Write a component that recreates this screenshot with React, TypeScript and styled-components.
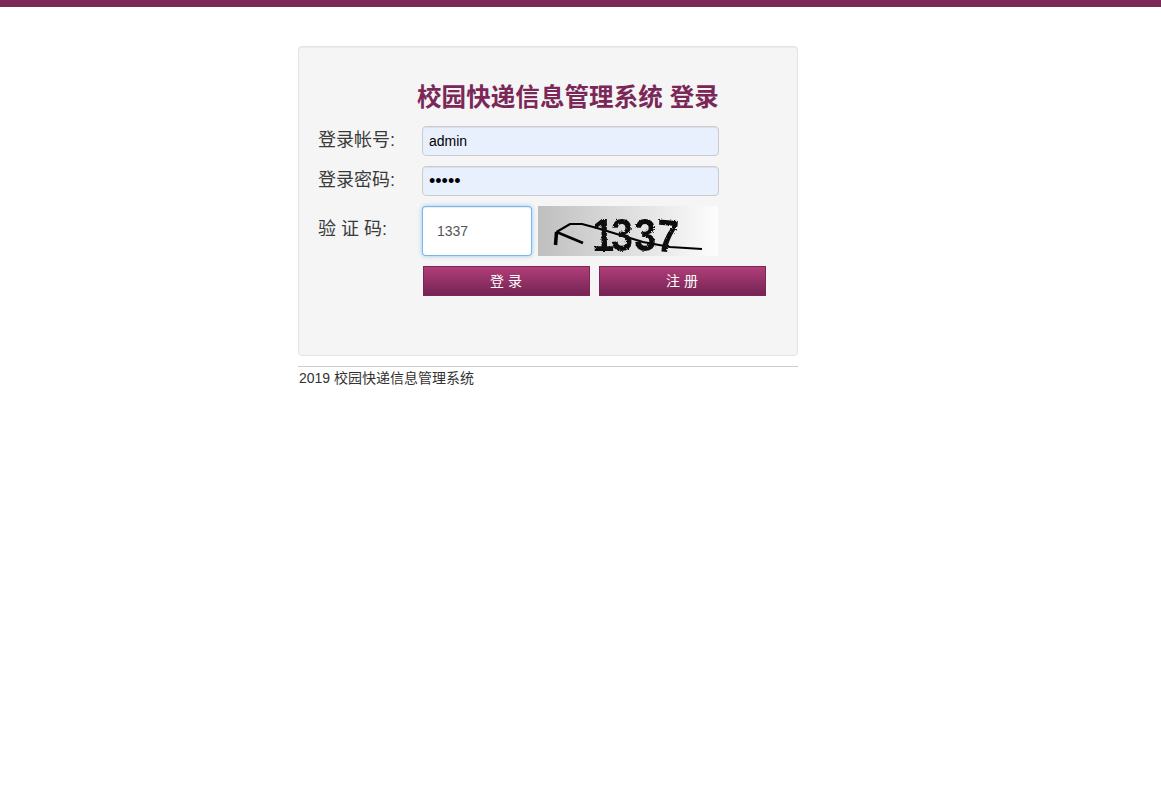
import React from 'react';
import styled, { createGlobalStyle } from 'styled-components';

const GlobalStyle = createGlobalStyle`
  html, body {
    margin: 0;
    padding: 0;
    background: #fff;
    color: #333;
    font-family: "Liberation Sans", "Noto Sans CJK SC", sans-serif;
    font-size: 14px;
  }
`;

const TopBar = styled.div`
  height: 7px;
  background: #7b2858;
`;

const Page = styled.div`
  width: 500px;
  margin-left: 298px;
  padding-top: 39px;
`;

const Well = styled.form`
  box-sizing: border-box;
  height: 310px;
  padding: 31px 19px 0;
  background: #f5f5f5;
  border: 1px solid #e3e3e3;
  border-radius: 4px;
  box-shadow: inset 0 1px 1px rgba(0, 0, 0, 0.05);
`;

const Title = styled.h3`
  margin: 0 0 8px 99px;
  font-size: 24.5px;
  line-height: 40px;
  font-weight: bold;
  letter-spacing: 0.08px;
  color: #7b2858;
`;

const Row = styled.div`
  display: flex;
  margin-bottom: 10px;
`;

const Label = styled.label<{ $tall?: boolean }>`
  width: 104px;
  flex: none;
  font-size: 18px;
  line-height: ${props => (props.$tall ? '46px' : '28px')};
  color: #3a3a3a;
`;

const Input = styled.input<{ $secret?: boolean }>`
  box-sizing: border-box;
  width: 297px;
  height: 30px;
  padding: 4px 6px;
  background: #e8f0fe;
  border: 1px solid #ccc;
  border-radius: 4px;
  box-shadow: inset 0 1px 1px rgba(0, 0, 0, 0.075);
  font-family: inherit;
  font-size: ${props => (props.$secret ? '18px' : '14px')};
  color: #000;
  outline: none;
`;

const CodeInput = styled.input`
  box-sizing: border-box;
  width: 110px;
  height: 50px;
  padding: 4px 14px;
  background: #fff;
  border: 1px solid rgba(82, 168, 236, 0.8);
  border-radius: 4px;
  box-shadow: inset 0 1px 1px rgba(0, 0, 0, 0.075), 0 0 4px rgba(82, 168, 236, 0.6);
  font-family: inherit;
  font-size: 14px;
  color: #555;
  outline: none;
`;

const Captcha = styled.svg`
  display: block;
  width: 180px;
  height: 50px;
  margin-left: 6px;
  overflow: visible;
  background: linear-gradient(to right, #bfbfbf, #fdfdfd);
`;

const Actions = styled.div`
  display: flex;
  gap: 9px;
  margin-left: 105px;
`;

const Button = styled.button`
  width: 167px;
  height: 30px;
  padding: 0 1px 2px 0;
  background: linear-gradient(to bottom, #b03e78, #752454);
  border: 1px solid #7b2858;
  border-radius: 0;
  font-family: inherit;
  font-size: 14px;
  color: #fff;
`;

const Footer = styled.footer`
  margin-top: 10px;
  padding: 1px 1px 0;
  border-top: 1px solid #ccc;
  font-size: 14px;
  line-height: 20px;
  color: #333;
`;

const App: React.FC = () => (
  <>
    <GlobalStyle />
    <TopBar />
    <Page>
      <Well onSubmit={e => e.preventDefault()}>
        <Title>校园快递信息管理系统 登录</Title>
        <Row>
          <Label>登录帐号:</Label>
          <Input type="text" defaultValue="admin" />
        </Row>
        <Row>
          <Label>登录密码:</Label>
          <Input $secret type="password" defaultValue="admin" />
        </Row>
        <Row>
          <Label $tall>验 证 码:</Label>
          <CodeInput type="text" defaultValue="1337" />
          <Captcha viewBox="0 0 180 50">
            <defs>
              <filter id="rough" x="-10%" y="-20%" width="120%" height="140%">
                <feTurbulence type="fractalNoise" baseFrequency="0.6" numOctaves="2" seed="4" />
                <feDisplacementMap in="SourceGraphic" scale="3" />
              </filter>
            </defs>
            <path d="M18.5 26 L32 18 L44 18 L59 22 L105 36 L132 41 L164 43" fill="none" stroke="#000" strokeWidth="2.2" />
            <path d="M17.5 39 L18.5 26" fill="none" stroke="#000" strokeWidth="3.5" />
            <path d="M18.5 26 L45 37" fill="none" stroke="#000" strokeWidth="2.5" />
            <g filter="url(#rough)">
              <text
                x="63 85 112 137"
                y="45"
                rotate="0 0 0 4"
                transform="scale(0.86 1)"
                fontFamily="Liberation Sans, sans-serif"
                fontWeight="bold"
                fontSize="46"
                fill="#111"
              >
                1337
              </text>
            </g>
          </Captcha>
        </Row>
        <Actions>
          <Button type="submit">登 录</Button>
          <Button type="button">注 册</Button>
        </Actions>
      </Well>
      <Footer>2019 校园快递信息管理系统</Footer>
    </Page>
  </>
);

export default App;
